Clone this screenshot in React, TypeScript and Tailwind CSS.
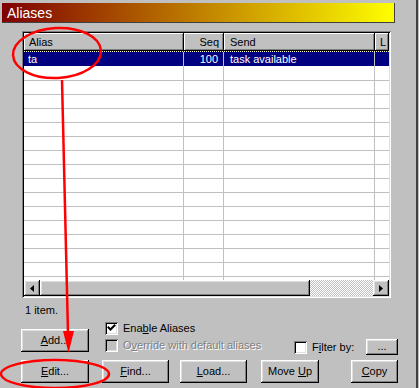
import React from "react";

const raised =
  "shadow-[inset_-1px_-1px_#000,inset_1px_1px_#fff,inset_-2px_-2px_#808080,inset_2px_2px_#dfdfdf]";
const sunkenBox =
  "shadow-[inset_1px_1px_#808080,inset_-1px_-1px_#fff,inset_2px_2px_#000,inset_-2px_-2px_#dfdfdf]";

function Btn({ w, className = "", children }: { w: string; className?: string; children: React.ReactNode }) {
  return (
    <div className={`${w} h-[23px] bg-[#c0c0c0] ${raised} flex items-center justify-center text-[11px] text-black ${className}`}>
      {children}
    </div>
  );
}

function Check({ checked, disabled }: { checked?: boolean; disabled?: boolean }) {
  return (
    <div className={`w-[13px] h-[13px] shrink-0 ${sunkenBox} ${disabled ? "bg-[#c0c0c0]" : "bg-white"} flex items-center justify-center`}>
      {checked && (
        <svg width="13" height="13" viewBox="0 0 13 13">
          <path d="M3.5 5.5 L5.5 7.5 L9.5 3.5" stroke="#000" strokeWidth="2" fill="none" strokeLinecap="square" />
        </svg>
      )}
    </div>
  );
}

const head = "h-[18px] bg-[#c0c0c0] shadow-[inset_-1px_-1px_#000,inset_1px_1px_#fff,inset_-2px_-2px_#808080] flex items-center text-[11px] text-black shrink-0";

export default function App() {
  const blanks = Array.from({ length: 16 });
  return (
    <div className="relative w-[419px] h-[388px] bg-[#c0c0c0] overflow-hidden font-['Liberation_Sans',Arial,sans-serif] select-none">
      <div className="w-[418px] h-[388px] border-r-2 border-[#404040] flex flex-col">
        {/* title bar */}
        <div className="ml-[2px] mt-[3px] w-[393px] h-[20px] bg-[linear-gradient(to_right,#800000,#ffff00)] shadow-[inset_-1px_-1px_#404040] flex items-center pl-[5px]">
          <span className="text-white text-[14px] leading-none">Aliases</span>
        </div>

        {/* list view */}
        <div className={`ml-[22px] mt-[8px] w-[369px] h-[267px] p-[2px] bg-white ${sunkenBox} flex flex-col`}>
          <div className="flex flex-col flex-1 overflow-hidden">
            <div className="flex">
              <div className={`${head} w-[160px] pl-[5px]`}>Alias</div>
              <div className={`${head} w-[40px] justify-end pr-[5px]`}>Seq</div>
              <div className={`${head} w-[151px] pl-[6px]`}>Send</div>
              <div className={`${head} flex-1 pl-[5px] overflow-hidden`}>L</div>
            </div>
            <div className="flex-1 overflow-hidden">
              <div className="flex h-[15px] bg-[#000080] text-white text-[11px] leading-[14px] border-t border-dotted border-[#ffffc0]">
                <div className="w-[160px] pl-[4px] border-r border-[#c0c0c0]">ta</div>
                <div className="w-[40px] pr-[5px] text-right border-r border-[#c0c0c0]">100</div>
                <div className="w-[151px] pl-[6px] border-r border-[#c0c0c0]">task available</div>
                <div className="flex-1" />
              </div>
              <div className="h-[1px] flex">
                <div className="w-[160px] border-r border-[#c0c0c0]" />
                <div className="w-[40px] border-r border-[#c0c0c0]" />
                <div className="w-[151px] border-r border-[#c0c0c0]" />
              </div>
              {blanks.map((_, i) => (
                <div key={i} className="flex h-[14px] border-b border-[#c0c0c0]">
                  <div className="w-[160px] border-r border-[#c0c0c0]" />
                  <div className="w-[40px] border-r border-[#c0c0c0]" />
                  <div className="w-[151px] border-r border-[#c0c0c0]" />
                  <div className="flex-1" />
                </div>
              ))}
            </div>
            {/* horizontal scrollbar */}
            <div className="h-[16px] flex shrink-0">
              <div className={`w-[16px] h-[16px] bg-[#c0c0c0] ${raised} flex items-center justify-center`}>
                <svg width="4" height="7" viewBox="0 0 4 7"><polygon points="4,0 0,3.5 4,7" fill="#000" /></svg>
              </div>
              <div className={`w-[270px] h-[16px] bg-[#c0c0c0] ${raised}`} />
              <div className="flex-1 h-[16px] bg-[repeating-conic-gradient(#c0c0c0_0%_25%,#ffffff_0%_50%)] bg-[length:2px_2px]" />
              <div className={`w-[16px] h-[16px] bg-[#c0c0c0] ${raised} flex items-center justify-center`}>
                <svg width="4" height="7" viewBox="0 0 4 7"><polygon points="0,0 4,3.5 0,7" fill="#000" /></svg>
              </div>
            </div>
          </div>
        </div>

        <div className="ml-[25px] mt-[6px] h-[13px] text-[11px] leading-[13px] text-black">1 item.</div>

        {/* row A */}
        <div className="mt-[5px] h-[33px] flex items-start pl-[21px]">
          <Btn w="w-[68px]" className="mt-[7px]">
            <span><u>A</u>dd...</span>
          </Btn>
          <div className="ml-[16px] w-[175px] flex flex-col gap-[4px]">
            <div className="flex items-center h-[13px]">
              <Check checked />
              <span className="ml-[5px] text-[11px] text-black">
                Ena<u>b</u>le Aliases
              </span>
            </div>
            <div className="flex items-center h-[13px]">
              <Check disabled />
              <span className="ml-[5px] text-[11px] text-[#808080] [text-shadow:1px_1px_0_#fff] whitespace-nowrap">
                O<u>v</u>erride with default aliases
              </span>
            </div>
          </div>
          <div className="ml-[14px] mt-[17px] w-[104px] flex items-center">
            <Check />
            <span className="ml-[5px] text-[11px] text-black">
              F<u>i</u>lter by:
            </span>
            <div className={`ml-auto w-[32px] h-[16px] bg-[#c0c0c0] ${raised} flex items-center justify-center text-[11px] leading-none pb-[2px]`}>
              ...
            </div>
          </div>
        </div>

        {/* row B */}
        <div className="mt-[5px] flex pl-[21px]">
          <Btn w="w-[68px]"><span><u>E</u>dit...</span></Btn>
          <Btn w="w-[67px]" className="ml-[13px]"><span><u>F</u>ind...</span></Btn>
          <Btn w="w-[67px]" className="ml-[11px]"><span><u>L</u>oad...</span></Btn>
          <Btn w="w-[58px]" className="ml-[14px]"><span>Move <u>U</u>p</span></Btn>
          <Btn w="w-[47px]" className="ml-[32px]"><span><u>C</u>opy</span></Btn>
        </div>
      </div>

      {/* red annotations drawn over the dialog */}
      <svg className="absolute inset-0 pointer-events-none" width="419" height="388" viewBox="0 0 419 388">
        <ellipse cx="57" cy="53" rx="44" ry="25" fill="none" stroke="#ff0000" strokeWidth="2.5" transform="rotate(-3 57 53)" />
        <line x1="62" y1="80" x2="68" y2="334" stroke="#ff0000" strokeWidth="2.5" />
        <polygon points="63,331 74,331 68.5,353" fill="#ff0000" />
        <ellipse cx="55" cy="374" rx="54" ry="14" fill="none" stroke="#ff0000" strokeWidth="2.5" />
      </svg>
    </div>
  );
}
